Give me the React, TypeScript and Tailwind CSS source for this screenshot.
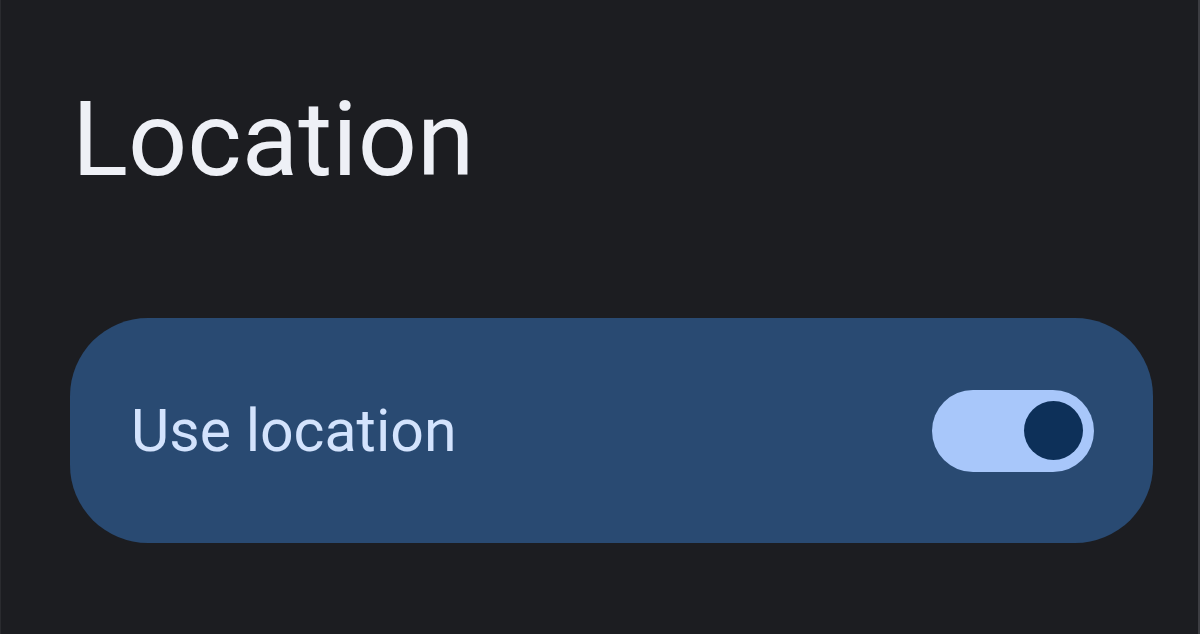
import React, { useState } from "react";

const Toggle = ({ on, onChange }: { on: boolean; onChange: () => void }) => (
  <button
    onClick={onChange}
    className={`flex h-[82px] w-[162px] shrink-0 items-center rounded-full px-[11px] ${
      on ? "justify-end bg-[#a8c7fa]" : "justify-start bg-[#44474e]"
    }`}
  >
    <span className={`block h-[59px] w-[59px] rounded-full ${on ? "bg-[#0d3059]" : "bg-[#8e918f]"}`} />
  </button>
);

export default function App() {
  const [enabled, setEnabled] = useState(true);

  return (
    <div className="h-[634px] w-[1200px] overflow-hidden border-l border-r-2 border-l-[#2a2b2f] border-r-[#3c3d42] bg-[#1c1d21] font-['Roboto',sans-serif]">
      {/* Header */}
      <h1 className="pl-[71px] pt-[80px] text-[104px] font-normal leading-[120px] text-[#eef0f6]">
        Location
      </h1>

      {/* Main switch row */}
      <div className="ml-[69px] mr-[45px] mt-[118px] flex h-[225px] items-center justify-between rounded-[78px] bg-[#294a72] pl-[61px] pr-[59px]">
        <span className="text-[59px] leading-none text-[#d3e3fd]">Use location</span>
        <Toggle on={enabled} onChange={() => setEnabled(!enabled)} />
      </div>
    </div>
  );
}
